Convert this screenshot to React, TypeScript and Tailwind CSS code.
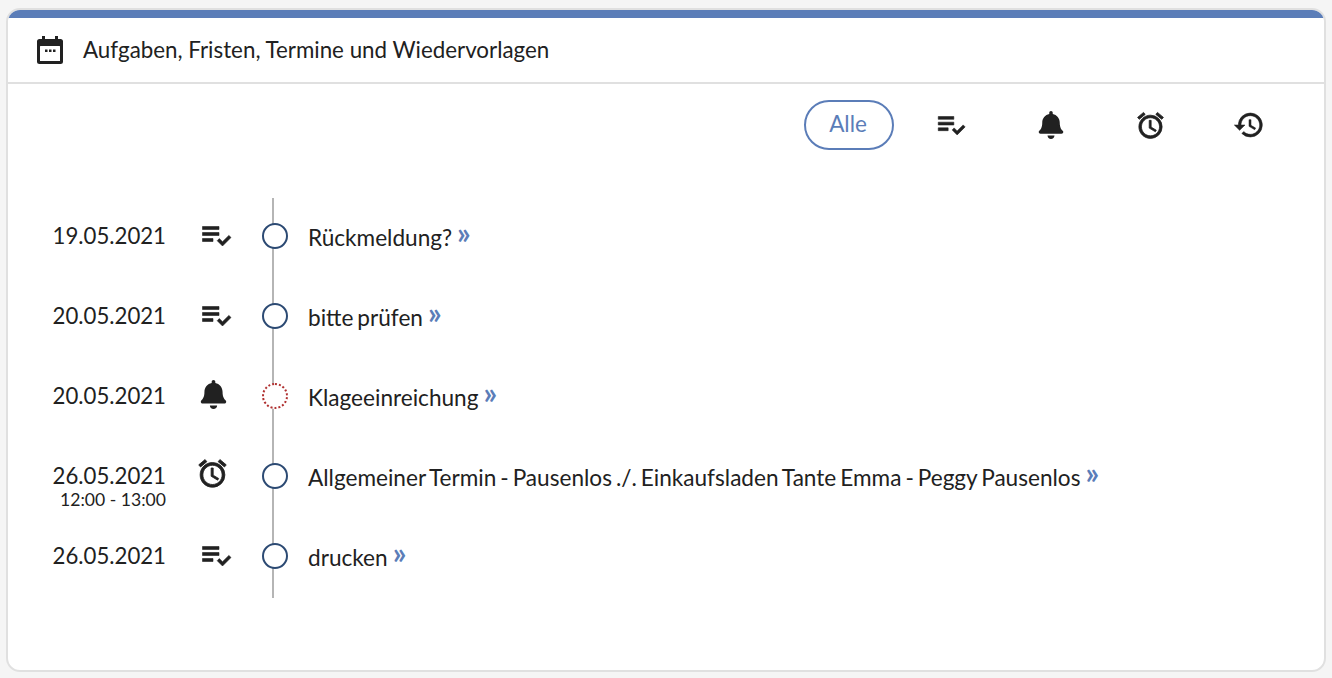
import { MdPlaylistAddCheck, MdOutlineAccessAlarm, MdHistory } from "react-icons/md";
import { FaBell } from "react-icons/fa";
import type { IconType } from "react-icons";

interface Eintrag {
  datum: string;
  zeit?: string;
  icon: IconType;
  iconClass: string;
  titel: string;
  frist?: boolean;
}

const listIcon = "mt-[-1px] text-[37px] stroke-[0.4] [&>path:first-child]:stroke-none";

const eintraege: Eintrag[] = [
  { datum: "19.05.2021", icon: MdPlaylistAddCheck, iconClass: listIcon, titel: "Rückmeldung?" },
  { datum: "20.05.2021", icon: MdPlaylistAddCheck, iconClass: listIcon, titel: "bitte prüfen" },
  { datum: "20.05.2021", icon: FaBell, iconClass: "mt-[2px] ml-[-6px] text-[29px]", titel: "Klageeinreichung", frist: true },
  {
    datum: "26.05.2021",
    zeit: "12:00 - 13:00",
    icon: MdOutlineAccessAlarm,
    iconClass: "mt-[-1px] ml-[-8px] text-[33px] stroke-[0.6] [&>path:first-child]:stroke-none",
    titel: "Allgemeiner Termin - Pausenlos ./. Einkaufsladen Tante Emma - Peggy Pausenlos",
  },
  { datum: "26.05.2021", icon: MdPlaylistAddCheck, iconClass: listIcon, titel: "drucken" },
];

function KalenderIcon() {
  return (
    <svg width="28" height="30" viewBox="0 0 28 30" className="text-[#212121]">
      <path
        fill="currentColor"
        d="M6 1h3v3h10V1h3v3h2.5A2.5 2.5 0 0 1 27 6.500v20a2.500 2.500 0 0 1-2.500 2.500h-21A2.500 2.500 0 0 1 1 26.500v-20A2.500 2.500 0 0 1 3.500 4H6z"
      />
      <rect x="4" y="11" width="20" height="15" rx="0.5" fill="#fff" />
      <rect x="9" y="14.500" width="2.500" height="2.500" fill="currentColor" />
      <rect x="13" y="14.500" width="2.500" height="2.500" fill="currentColor" />
      <rect x="17" y="14.500" width="2.500" height="2.500" fill="currentColor" />
    </svg>
  );
}

export default function App() {
  return (
    <div className="h-[678px] bg-[#f5f5f5] pt-[8px] pr-[6px] pb-[6px] pl-[6px] font-['Lato','Open_Sans',sans-serif] text-[#212121]">
      <section className="h-full overflow-hidden rounded-[14px] border-2 border-[#e0e0e0] bg-white">
        <div className="h-2 bg-[#5b7db8]" />
        <header className="flex h-[66px] items-center border-b-2 border-[#e0e0e0] pl-[28px]">
          <KalenderIcon />
          <h2 className="ml-[19px] text-[22.35px] font-normal">Aufgaben, Fristen, Termine und Wiedervorlagen</h2>
        </header>

        <div className="flex items-center pt-[16px] pl-[796px]">
          <button className="h-[50px] w-[90px] rounded-[25px] border-2 border-[#5b7db8] pb-[2px] pr-[2px] text-[22.5px] text-[#5b7db8]">
            Alle
          </button>
          <MdPlaylistAddCheck className="ml-[40px] text-[34px] stroke-[0.4] [&>path:first-child]:stroke-none" />
          <FaBell className="ml-[69px] text-[28px]" />
          <MdOutlineAccessAlarm className="ml-[70px] text-[31px] stroke-[0.6] [&>path:first-child]:stroke-none" />
          <MdHistory className="ml-[67px] text-[32px] stroke-[0.4] [&>path:first-child]:stroke-none" />
        </div>

        <div className="relative mt-[48px] h-[400px]">
          <div className="absolute top-0 bottom-0 left-[264px] w-[2px] bg-[#b5b5b5]" />
          {eintraege.map((e, i) => {
            const Icon = e.icon;
            return (
              <div key={i} className="relative flex h-20 items-start pt-[20px]">
                <div className="w-[158px] shrink-0 text-right text-[22.2px] leading-[36px]">
                  <div>{e.datum}</div>
                  {e.zeit && <div className="-mt-[4px] text-[17.6px] leading-[20px]">{e.zeit}</div>}
                </div>
                <div className="ml-[32px] flex w-[36px] shrink-0 justify-center">
                  <Icon className={e.iconClass} />
                </div>
                <div
                  className={
                    e.frist
                      ? "mt-[5px] ml-[28px] h-[26px] w-[26px] shrink-0 rounded-full border-2 border-dotted border-[#b03030] bg-white"
                      : "mt-[5px] ml-[28px] h-[26px] w-[26px] shrink-0 rounded-full border-2 border-[#2c4a73] bg-white"
                  }
                />
                <div className="mt-[2px] ml-[20px] text-[22.6px] leading-[36px] [word-spacing:-1.8px]">
                  {e.titel}{" "}
                  <span className="relative -top-[2px] ml-[1px] text-[30px] leading-[20px] font-bold text-[#5b7db8]">»</span>
                </div>
              </div>
            );
          })}
        </div>
      </section>
    </div>
  );
}
